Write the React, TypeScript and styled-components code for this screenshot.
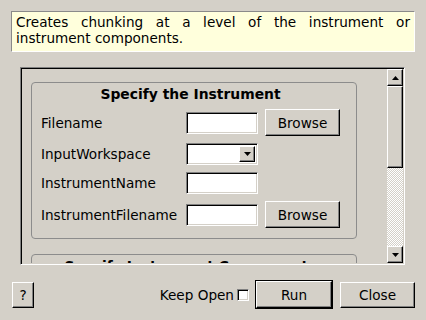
import React from "react";
import styled, { createGlobalStyle } from "styled-components";

const Global = createGlobalStyle`
  html, body { margin: 0; padding: 0; background: #d4d0c8; }
  body { font-family: "DejaVu Sans", "Liberation Sans", sans-serif; font-size: 13.6px; color: #000; }
  * { box-sizing: border-box; }
`;

const Window = styled.div`
  width: 426px;
  height: 320px;
  padding: 11px 11px 0 11px;
  display: flex;
  flex-direction: column;
  background: #d4d0c8;
  overflow: hidden;
`;

const Description = styled.div`
  height: 41px;
  background: #ffffdc;
  border-top: 1px solid #8a8a8a;
  border-left: 1px solid #8a8a8a;
  border-right: 1px solid #ffffff;
  border-bottom: 1px solid #ffffff;
  padding: 3px 4px 0 4px;
  line-height: 15.5px;
  text-align: justify;
`;

const ScrollFrame = styled.div`
  margin: 15px 10px 0 9px;
  height: 198px;
  display: flex;
  border-top: 1px solid #808080;
  border-left: 1px solid #808080;
  border-right: 1px solid #ffffff;
  border-bottom: 1px solid #ffffff;
  box-shadow: inset 1px 1px 0 #000, inset -1px -1px 0 #d4d0c8;
  padding: 1px;
`;

const Viewport = styled.div`
  flex: 1;
  overflow: hidden;
  padding: 13px 30px 0 9px;
  display: flex;
  flex-direction: column;
  gap: 15px;
`;

const Group = styled.div`
  flex-shrink: 0;
  border: 1px solid #8c8c8c;
  border-radius: 4px;
  padding: 3px 16px 10px 9px;
  display: flex;
  flex-direction: column;
  gap: 7px;
`;

const GroupTitle = styled.div`
  font-weight: bold;
  font-size: 13.9px;
  text-align: center;
  line-height: 16px;
`;

const Grid = styled.div`
  display: grid;
  grid-template-columns: auto 72px 75px;
  column-gap: 7px;
  row-gap: 7px;
  align-items: center;
`;

const Label = styled.div`
  white-space: nowrap;
  line-height: 16px;
`;

const sunken = `
  border-top: 1px solid #808080;
  border-left: 1px solid #808080;
  border-right: 1px solid #ffffff;
  border-bottom: 1px solid #ffffff;
  box-shadow: inset 1px 1px 0 #000, inset -1px -1px 0 #d4d0c8;
`;

const TextBox = styled.div`
  width: 72px;
  height: 22px;
  background: #fff;
  ${sunken}
`;

const Combo = styled.div`
  width: 72px;
  height: 22px;
  background: #fff;
  ${sunken}
  display: flex;
  justify-content: flex-end;
  padding: 2px;
`;

const ComboButton = styled.div`
  width: 16px;
  height: 100%;
  background: #d4d0c8;
  border-top: 1px solid #fff;
  border-left: 1px solid #fff;
  border-right: 1px solid #000;
  border-bottom: 1px solid #000;
  box-shadow: inset -1px -1px 0 #808080;
  display: flex;
  align-items: center;
  justify-content: center;
`;

const Button = styled.button<{ $w: number; $h: number; $default?: boolean }>`
  width: ${(p) => p.$w}px;
  height: ${(p) => p.$h}px;
  font-family: "DejaVu Sans", "Liberation Sans", sans-serif;
  font-size: 13.6px;
  color: #000;
  background: #d4d0c8;
  padding: 0;
  border-top: 1px solid #fff;
  border-left: 1px solid #fff;
  border-right: 1px solid #000;
  border-bottom: 1px solid #000;
  box-shadow: inset -1px -1px 0 #808080;
  outline: ${(p) => (p.$default ? "1px solid #000" : "none")};
  outline-offset: 0;
  flex-shrink: 0;
`;

const Scrollbar = styled.div`
  width: 16px;
  display: flex;
  flex-direction: column;
`;

const ArrowButton = styled.div`
  height: 17px;
  background: #d4d0c8;
  border-top: 1px solid #fff;
  border-left: 1px solid #fff;
  border-right: 1px solid #000;
  border-bottom: 1px solid #000;
  box-shadow: inset -1px -1px 0 #808080;
  display: flex;
  align-items: center;
  justify-content: center;
`;

const Handle = styled.div`
  height: 82px;
  background: #d4d0c8;
  border-top: 1px solid #fff;
  border-left: 1px solid #fff;
  border-right: 1px solid #000;
  border-bottom: 1px solid #000;
  box-shadow: inset -1px -1px 0 #808080;
`;

const Track = styled.div`
  flex: 1;
  background: repeating-conic-gradient(#ffffff 0 25%, #d4d0c8 0 50%) 0 0 / 2px 2px;
`;

const Footer = styled.div`
  margin-top: 16px;
  padding-left: 1px;
  display: flex;
  align-items: center;
`;

const Spacer = styled.div<{ $fixed?: number }>`
  flex: ${(p) => (p.$fixed ? `0 0 ${p.$fixed}px` : "1")};
`;

const KeepLabel = styled.span`
  margin-right: 3px;
`;

const Check = styled.div`
  width: 12px;
  height: 12px;
  background: #fff;
  ${sunken}
  margin-right: 7px;
`;

const Arrow = ({ down }: { down?: boolean }) => (
  <svg width="7" height="4" viewBox="0 0 7 4">
    <polygon points={down ? "0,0 7,0 3.5,4" : "0,4 7,4 3.5,0"} fill="#000" />
  </svg>
);

export default function App() {
  return (
    <>
      <Global />
      <Window>
        <Description>
          Creates chunking at a level of the instrument or instrument components.
        </Description>
        <ScrollFrame>
          <Viewport>
            <Group>
              <GroupTitle>Specify the Instrument</GroupTitle>
              <Grid>
                <Label>Filename</Label>
                <TextBox />
                <Button $w={75} $h={27}>Browse</Button>
                <Label>InputWorkspace</Label>
                <Combo>
                  <ComboButton>
                    <Arrow down />
                  </ComboButton>
                </Combo>
                <div />
                <Label>InstrumentName</Label>
                <TextBox />
                <div />
                <Label>InstrumentFilename</Label>
                <TextBox />
                <Button $w={75} $h={27}>Browse</Button>
              </Grid>
            </Group>
            <Group>
              <GroupTitle>Specify Instrument Components</GroupTitle>
            </Group>
          </Viewport>
          <Scrollbar>
            <ArrowButton>
              <Arrow />
            </ArrowButton>
            <Handle />
            <Track />
            <ArrowButton>
              <Arrow down />
            </ArrowButton>
          </Scrollbar>
        </ScrollFrame>
        <Footer>
          <Button $w={22} $h={26}>?</Button>
          <Spacer />
          <KeepLabel>Keep Open</KeepLabel>
          <Check />
          <Button $w={76} $h={27} $default>Run</Button>
          <Spacer $fixed={8} />
          <Button $w={75} $h={26}>Close</Button>
        </Footer>
      </Window>
    </>
  );
}
